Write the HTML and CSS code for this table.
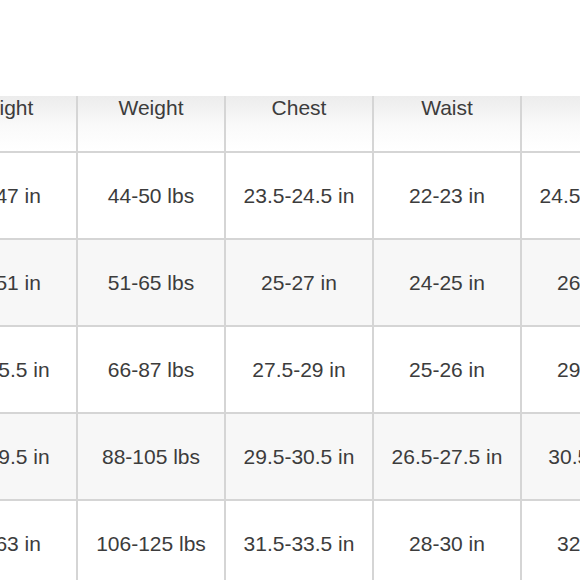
FILE: index.html
```html
<!DOCTYPE html>
<html>
<head>
<meta charset="utf-8">
<link rel="stylesheet" href="styles.css">
</head>
<body>
<div class="page">
  <table class="size-chart">
    <thead>
      <tr>
        <th>Height</th>
        <th>Weight</th>
        <th>Chest</th>
        <th>Waist</th>
        <th></th>
      </tr>
    </thead>
    <tbody>
      <tr>
        <td>45-47 in</td>
        <td>44-50 lbs</td>
        <td>23.5-24.5 in</td>
        <td>22-23 in</td>
        <td>24.5-25.5 in</td>
      </tr>
      <tr class="alt">
        <td>48-51 in</td>
        <td>51-65 lbs</td>
        <td>25-27 in</td>
        <td>24-25 in</td>
        <td>26-28 in</td>
      </tr>
      <tr>
        <td>52-55.5 in</td>
        <td>66-87 lbs</td>
        <td>27.5-29 in</td>
        <td>25-26 in</td>
        <td>29-30 in</td>
      </tr>
      <tr class="alt">
        <td>56-59.5 in</td>
        <td>88-105 lbs</td>
        <td>29.5-30.5 in</td>
        <td>26.5-27.5 in</td>
        <td>30.5-32 in</td>
      </tr>
      <tr>
        <td>60-63 in</td>
        <td>106-125 lbs</td>
        <td>31.5-33.5 in</td>
        <td>28-30 in</td>
        <td>32-34 in</td>
      </tr>
    </tbody>
  </table>
</div>
</body>
</html>
```

FILE: styles.css
```css
html, body {
  margin: 0;
  padding: 0;
  background: #ffffff;
  overflow: hidden;
}

.page {
  width: 580px;
  height: 580px;
  overflow: hidden;
  padding-top: 96px;
  box-sizing: border-box;
}

.size-chart {
  width: 740px;
  min-width: 740px;
  margin-left: -70px;
  border-collapse: separate;
  border-spacing: 0;
  table-layout: fixed;
  font-family: "Liberation Sans", Arial, sans-serif;
  font-size: 21px;
  color: #3c3c3c;
}

.size-chart th,
.size-chart td {
  width: 148px;
  box-sizing: border-box;
  border-right: 2px solid #d5d5d5;
  border-bottom: 2px solid #d5d5d5;
  text-align: center;
  padding: 0;
  white-space: nowrap;
}

.size-chart th {
  height: 57px;
  vertical-align: top;
  font-weight: normal;
  background: linear-gradient(#ececec, #fafafa 55%, #ffffff);
}

.size-chart td {
  height: 87px;
  vertical-align: middle;
  background: #ffffff;
}

.size-chart tr.alt td {
  background: #f7f7f7;
}
```
